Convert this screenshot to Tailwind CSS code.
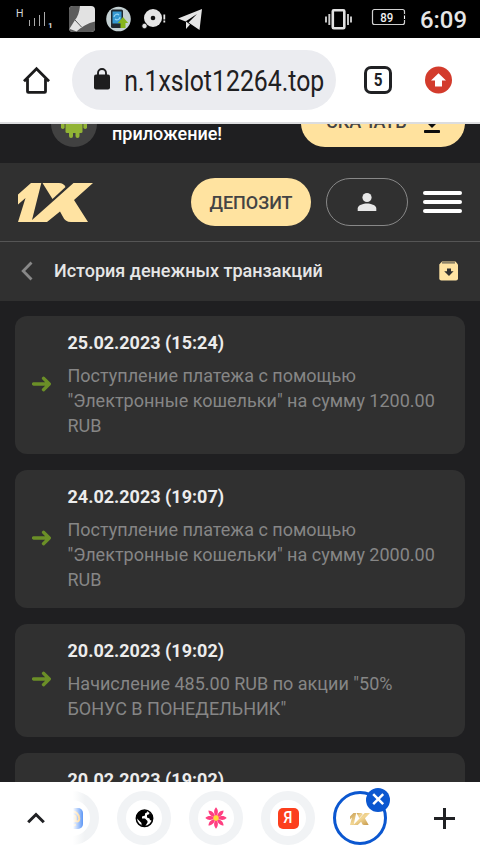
<!DOCTYPE html>
<html lang="ru">
<head>
<meta charset="utf-8">
<title>История денежных транзакций</title>
<script src="https://cdn.jsdelivr.net/npm/@tailwindcss/browser@4"></script>
</head>
<body class="w-[480px] h-[854px] overflow-hidden bg-[#1f1f21] font-[Roboto,sans-serif] flex flex-col">

<!-- Status bar -->
<div class="h-[38px] shrink-0 bg-black">
<svg width="480" height="38" viewBox="0 0 480 38" class="block" font-family="Roboto, sans-serif">
  <text x="16" y="17" font-size="10.5" fill="#d8d8d8">H</text>
  <path d="M29.500 20v6M34.500 18v8M39.500 15v11M44.500 12v14" stroke="#aaa" stroke-width="1"/>
  <text x="48" y="28" font-size="8" font-weight="700" fill="#ddd">1</text>
  <clipPath id="tile"><rect x="69" y="6" width="26" height="26" rx="4"/></clipPath>
  <g clip-path="url(#tile)">
    <rect x="69" y="6" width="26" height="26" fill="#e2e2e2"/>
    <path d="M69 6H80C79.500 12 77.500 17 75 20L70 28L69 32Z" fill="#5c5c5c"/>
    <path d="M69 32L70 29L78 32ZM76 32C81 27 88 23 95 21.500V32Z" fill="#5c5c5c"/>
    <path d="M75 20L81.500 27" stroke="#555" stroke-width="1" fill="none"/>
  </g>
  <circle cx="118.500" cy="19" r="12.300" fill="#c3d0d2"/>
  <rect x="111" y="9.500" width="12" height="18.500" rx="1.500" fill="#20282e"/>
  <rect x="112.500" y="11.500" width="9" height="12" fill="#3597cf"/>
  <path d="M114 17a3 3 0 0 1 5-2M120 17a3 3 0 0 1-5 2" fill="none" stroke="#91d3f2" stroke-width="1.200"/>
  <path d="M123 17l5.200 6h-2.700v5h-5v-5h-2.700z" fill="#86b51c"/>
  <circle cx="153" cy="18" r="9" fill="#e5e5e5"/><circle cx="153" cy="18" r="2.300" fill="#111"/>
  <circle cx="144.500" cy="26" r="2.700" fill="#e5e5e5" stroke="#000" stroke-width=".8"/>
  <path d="M164.300 14.500v5M164.300 20.500v2" stroke="#e5e5e5" stroke-width="1.800"/>
  <path d="M202 9L178 18.500L185.500 21.500L197 14L188.500 22.500L199.500 30Z" fill="#e5e5e5"/>
  <path d="M186 21.500v7.500l4-4.500z" fill="#e5e5e5"/>
  <rect x="332.800" y="10.300" width="11.500" height="18" rx="1" fill="none" stroke="#e2e2e2" stroke-width="2.600"/>
  <path d="M329.300 14v11M348 14v11M326 16.500v6M351 16.500v6" stroke="#ccc" stroke-width="1.900"/>
  <rect x="372.500" y="9.500" width="32" height="15" rx="2" fill="none" stroke="#d0d0d0" stroke-width="1.200"/>
  <path d="M404.500 14v6" stroke="#000" stroke-width="1.500"/><path d="M404.500 15.500v3.500" stroke="#fff" stroke-width="1"/>
  <text x="380.300" y="21.800" font-size="13" font-weight="500" fill="#eee" textLength="13" lengthAdjust="spacingAndGlyphs">89</text>
  <text x="420" y="28" font-size="24" font-weight="500" fill="#e6e6e6" textLength="47" lengthAdjust="spacingAndGlyphs">6:09</text>
</svg>
</div>

<!-- Browser toolbar -->
<div class="h-[86px] shrink-0 bg-white border-b-2 border-[#dcdddf] flex items-center">
  <svg width="28" height="28" viewBox="0 0 28 28" class="ml-[22px] shrink-0" fill="none" stroke="#1b1b1c" stroke-width="2.800">
    <path d="M2 15.200L14.500 2.700L27 15.200"/><path d="M5.500 12.500V25.500Q5.500 26.400 6.400 26.400H22.600Q23.500 26.400 23.500 25.500V12.500"/>
  </svg>
  <div class="ml-[22px] w-[264px] h-[60px] rounded-full bg-[#ebecf0] flex items-center shrink-0">
    <svg width="16" height="22" viewBox="0 0 16 22" class="ml-[22px] mb-[2px] shrink-0"><rect y="6.500" width="16" height="15" rx="2" fill="#1d1d1e"/><path d="M4 8V5a4 4 0 0 1 8 0v3" fill="none" stroke="#1d1d1e" stroke-width="1.900"/></svg>
    <svg width="206" height="44" viewBox="0 0 206 44" class="ml-[14px] shrink-0"><text x=".3" y="32.500" font-size="29.500" font-family="Roboto, sans-serif" fill="#1f2022" textLength="200" lengthAdjust="spacingAndGlyphs">n.1xslot12264.top</text></svg>
  </div>
  <div class="ml-[28px] w-[28px] h-[28px] shrink-0 rounded-[7px] border-[3px] border-[#202124] flex items-center justify-center text-[18px] leading-none font-bold text-[#202124]"><span class="scale-x-85">5</span></div>
  <svg width="28" height="28" viewBox="0 0 28 28" class="ml-[33px] shrink-0"><circle cx="13.500" cy="14" r="13.500" fill="#d33b2c"/><path d="M13.500 7.200L21 14.600H17V20.500H10V14.600H6Z" fill="#fff"/></svg>
</div>

<!-- App promo strip, scrolled partly under the toolbar -->
<div class="h-[39px] shrink-0 overflow-hidden flex items-end pl-[51px] pr-[15px] pb-[16px]">
  <div class="w-[46px] h-[46px] shrink-0 rounded-full bg-[#414141]">
    <svg width="46" height="46" viewBox="0 0 46 46"><g fill="#92b435"><path d="M14.500 17h17v13.500q0 1.500-1.500 1.500h-14q-1.500 0-1.500-1.500z"/><rect x="18" y="27" width="4" height="10" rx="2"/><rect x="24.500" y="27" width="4" height="10" rx="2"/><rect x="10" y="16" width="3.600" height="12" rx="1.800"/><rect x="32.400" y="16" width="3.600" height="12" rx="1.800"/></g></svg>
  </div>
  <div class="ml-[15px] mb-px text-[18px] leading-[24px] font-medium text-white w-[189px]">приложение!</div>
  <div class="w-[164px] h-[48px] shrink-0 rounded-full bg-[#ffe29e] flex items-center pl-[25px] text-[18px] font-medium text-[#444]">
    <span class="w-[98px] leading-[22px] mb-[2px]">СКАЧАТЬ</span>
    <svg width="16" height="20" viewBox="0 0 16 20" class="mt-[3px]" fill="#0d0d0d"><path d="M5 0h6v6h4L8 13L1 6h4z"/><rect y="15" width="16" height="3" rx=".8"/></svg>
  </div>
</div>

<!-- Site header -->
<header class="h-[79px] shrink-0 bg-[#303030] border-b border-[#555] flex items-center pl-[18px]">
  <svg width="75" height="39" viewBox="0 0 75 39" class="shrink-0 mr-[98px]" fill="#ffe3a2">
    <path d="M0 11.500L13 0H23.300L14 37L36.500 17L55.500 0H75L56 17L70 39H53Q47 39 44.500 33L42 28.500L29 39H0L7.500 15L0 21.500Z"/>
    <path d="M24.500 0H41Q45.500 0 47.500 4L34.500 16Z"/>
  </svg>
  <div class="w-[120px] h-[48px] shrink-0 rounded-full bg-[#ffe3a0] flex items-center justify-center text-[18px] font-medium text-[#444]">ДЕПОЗИТ</div>
  <div class="ml-[15px] w-[82px] h-[48px] shrink-0 rounded-full border border-[#888] flex items-center justify-center">
    <svg width="20" height="20" viewBox="0 0 20 20" fill="#e7e7e7"><circle cx="10" cy="5.500" r="4.600"/><path d="M.7 19v-2.500C.7 13 6.500 11.600 10 11.600s9.300 1.400 9.300 4.900V19z"/></svg>
  </div>
  <div class="ml-[15px] w-[39px] flex flex-col gap-[5px]">
    <i class="h-[4px] rounded-[2px] bg-white"></i><i class="h-[4px] rounded-[2px] bg-white"></i><i class="h-[4px] rounded-[2px] bg-white"></i>
  </div>
</header>

<!-- Page title -->
<div class="h-[59px] shrink-0 bg-[#303030] flex items-center pl-[21px] pr-[22px] pb-px">
  <svg width="12" height="20" viewBox="0 0 12 20" fill="none" stroke="#888" stroke-width="2.800"><path d="M10.500 1.500L2.200 10L10.500 18.500"/></svg>
  <h1 class="ml-[21px] flex-1 text-[18px] leading-[24px] font-medium text-[#e6e6e6]">История денежных транзакций</h1>
  <svg width="20" height="20" viewBox="0 0 20 20" class="mr-[-1px]"><path d="M3 .5h13.500L19 3.500V17.500Q19 19.500 17 19.500H2.300Q.3 19.500 .3 17.500V3.500Z" fill="#ffe3a2"/><path d="M3 1.900h13" stroke="#444" stroke-width="1"/><path d="M8 7.500h4v2.800h2.600L10 15L5.200 10.300H8z" fill="#303030"/></svg>
</div>

<!-- Transactions -->
<main class="flex-1 min-h-0 overflow-hidden px-[15px] pt-[15px] flex flex-col gap-[16px] text-[18px] leading-[25px]">
  <section class="shrink-0 rounded-[12px] bg-[#303030] pt-[14px] pb-[16px] pl-[17px] pr-[20px] flex">
    <svg width="20" height="16" viewBox="0 0 20 16" class="shrink-0 mr-[15.5px] self-center mt-[-1px]" fill="none" stroke="#6b8f27" stroke-width="3.300" stroke-linecap="round" stroke-linejoin="round"><path d="M1.500 8H17M11.500 2.300L17.300 8L11.500 13.700"/></svg>
    <div><h2 class="mb-[8px] font-bold text-[#ececec]">25.02.2023 (15:24)</h2><p class="text-[#868686]">Поступление платежа с помощью<br>"Электронные кошельки" на сумму 1200.00<br>RUB</p></div>
  </section>
  <section class="shrink-0 rounded-[12px] bg-[#303030] pt-[14px] pb-[16px] pl-[17px] pr-[20px] flex">
    <svg width="20" height="16" viewBox="0 0 20 16" class="shrink-0 mr-[15.5px] self-center mt-[-1px]" fill="none" stroke="#6b8f27" stroke-width="3.300" stroke-linecap="round" stroke-linejoin="round"><path d="M1.500 8H17M11.500 2.300L17.300 8L11.500 13.700"/></svg>
    <div><h2 class="mb-[8px] font-bold text-[#ececec]">24.02.2023 (19:07)</h2><p class="text-[#868686]">Поступление платежа с помощью<br>"Электронные кошельки" на сумму 2000.00<br>RUB</p></div>
  </section>
  <section class="shrink-0 rounded-[12px] bg-[#303030] pt-[14px] pb-[16px] pl-[17px] pr-[20px] flex">
    <svg width="20" height="16" viewBox="0 0 20 16" class="shrink-0 mr-[15.5px] self-center mt-[-1px]" fill="none" stroke="#6b8f27" stroke-width="3.300" stroke-linecap="round" stroke-linejoin="round"><path d="M1.500 8H17M11.500 2.300L17.300 8L11.500 13.700"/></svg>
    <div><h2 class="mb-[8px] font-bold text-[#ececec]">20.02.2023 (19:02)</h2><p class="text-[#868686]">Начисление 485.00 RUB по акции "50%<br>БОНУС В ПОНЕДЕЛЬНИК"</p></div>
  </section>
  <section class="shrink-0 h-[113px] rounded-[12px] bg-[#303030] pt-[14px] pl-[52.500px]">
    <h2 class="font-bold text-[#ececec]">20.02.2023 (19:02)</h2>
  </section>
</main>

<!-- Tab strip -->
<nav class="h-[72px] shrink-0 bg-white flex items-center">
  <svg width="18" height="12" viewBox="0 0 18 12" class="ml-[27px] mr-[28px] shrink-0" fill="none" stroke="#202124" stroke-width="3"><path d="M1.200 10.300L9 2.500L16.800 10.300"/></svg>
  <div class="relative w-[26px] h-[54px] overflow-hidden shrink-0 flex justify-end">
    <div class="shrink-0 w-[54px] h-[54px] rounded-full border-[9px] border-[#f1f3f5] flex items-center justify-center">
      <svg width="21" height="21" viewBox="0 0 21 21"><rect width="21" height="21" rx="5" fill="#3c82f4"/><g fill="none" stroke="#ffc15c" stroke-width="2"><circle cx="10.500" cy="10.500" r="3"/><path d="M13.500 7.500v4q0 2 1.800 2t2-3A7 7 0 1 0 14 16.500"/></g></svg>
    </div>
    <div class="absolute left-0 top-0 w-[12px] h-full bg-linear-to-r from-white to-white/0"></div>
  </div>
  <div class="ml-[18px] w-[54px] h-[54px] shrink-0 rounded-full border-[9px] border-[#f1f3f5] flex items-center justify-center">
    <svg width="20" height="20" viewBox="0 0 20 20"><circle cx="10.500" cy="10.300" r="8.200" fill="#fff" stroke="#000" stroke-width="1.500"/><path d="M2.500 8C4 3.500 8 1.500 12.500 2.500L13.500 4L11 5.500V7.500L8 8.500V10.500H11L13.500 13V14.500L11 18.500C8 18.500 7 17 7.500 15L3 10.500Z" fill="#000"/><path d="M14.500 3.500L18.500 8V13L16 12L15.500 10.500L13 9.500V7L15.500 6Z" fill="#000"/></svg>
  </div>
  <div class="ml-[18px] w-[54px] h-[54px] shrink-0 rounded-full border-[9px] border-[#f1f3f5] flex items-center justify-center">
    <svg width="22" height="22" viewBox="-11 -11 22 22"><g fill="#ff4081"><path id="petal" d="M0-1C-2.700-5-2.300-8 0-10.700C2.300-8 2.700-5 0-1Z"/><use href="#petal" transform="rotate(45)"/><use href="#petal" transform="rotate(90)"/><use href="#petal" transform="rotate(135)"/><use href="#petal" transform="rotate(180)"/><use href="#petal" transform="rotate(225)"/><use href="#petal" transform="rotate(270)"/><use href="#petal" transform="rotate(315)"/></g><circle r="2.700" fill="#ffdc35"/></svg>
  </div>
  <div class="ml-[18px] w-[54px] h-[54px] shrink-0 rounded-full border-[9px] border-[#f1f3f5] flex items-center justify-center">
    <div class="w-[21px] h-[21px] rounded-[5px] bg-[#fc3f1d] flex items-center justify-center text-[16px] leading-none font-medium text-white"><span class="scale-x-90">Я</span></div>
  </div>
  <div class="relative ml-[18px] w-[54px] h-[54px] shrink-0 rounded-full border-[3px] border-[#0b57d0] flex items-center justify-center">
    <svg width="20" height="12" viewBox="0 0 75 39" preserveAspectRatio="none" class="mt-[1px]"><defs><linearGradient id="gold" x2="1" y2="1"><stop stop-color="#c89f55"/><stop offset=".5" stop-color="#f3d794"/><stop offset="1" stop-color="#c39547"/></linearGradient></defs><g fill="url(#gold)"><path d="M0 11.500L13 0H23.300L14 37L36.500 17L55.500 0H75L56 17L70 39H53Q47 39 44.500 33L42 28.500L29 39H0L7.500 15L0 21.500Z"/><path d="M24.500 0H41Q45.500 0 47.500 4L34.500 16Z"/></g></svg>
    <svg width="24" height="24" viewBox="0 0 24 24" class="absolute right-[-6px] top-[-6px]"><circle cx="12" cy="12" r="12" fill="#0b57d0"/><path d="M7.200 6.200L17.200 16.200M17.200 6.200L7.200 16.200" stroke="#fff" stroke-width="2.500"/></svg>
  </div>
  <svg width="22" height="22" viewBox="0 0 22 22" class="ml-[47px] mt-px shrink-0"><path d="M10.500 0V21M0 10.500H21" stroke="#202124" stroke-width="3"/></svg>
</nav>
</body>
</html>
